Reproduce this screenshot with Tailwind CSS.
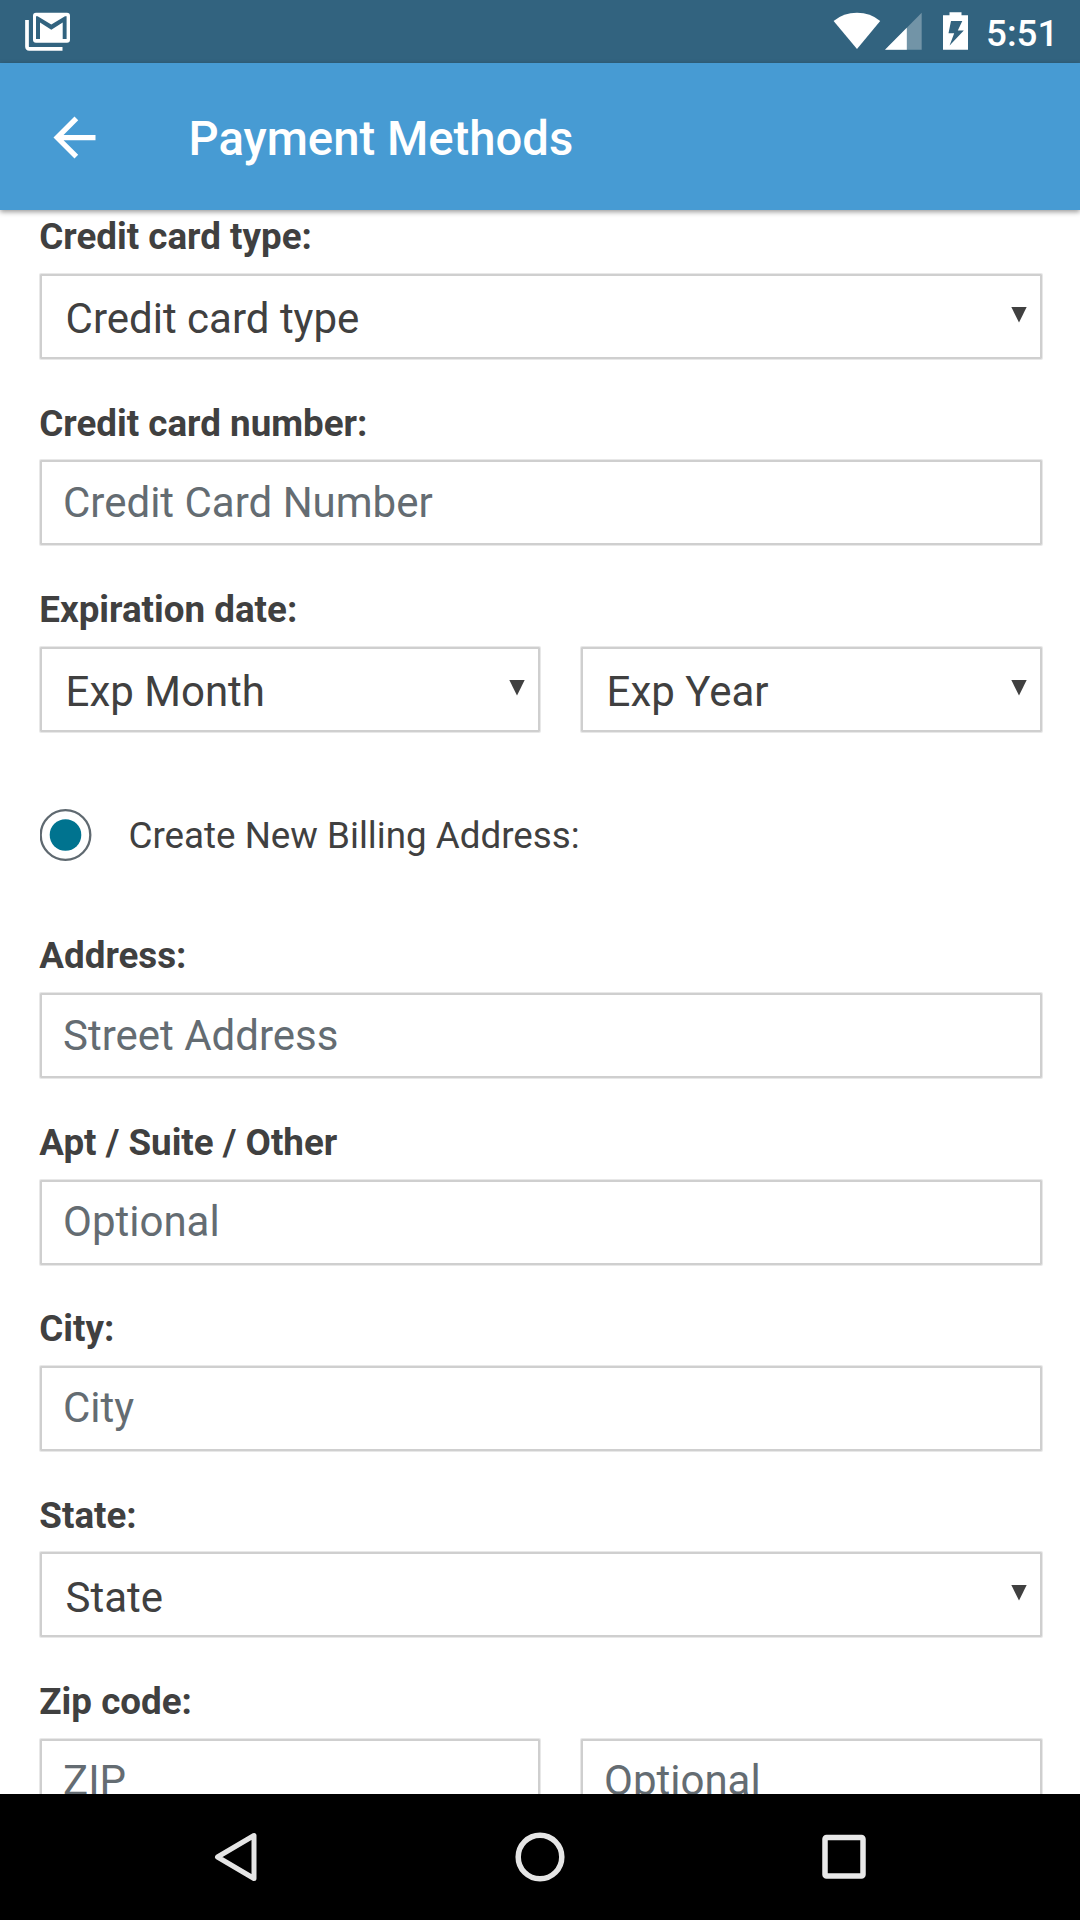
<!DOCTYPE html>
<html lang="en">
<head>
<meta charset="utf-8">
<title>Payment Methods</title>
<script src="https://cdn.jsdelivr.net/npm/@tailwindcss/browser@4"></script>
</head>
<body class="bg-white">
<div class="flex h-[1920px] w-[1080px] flex-col overflow-hidden bg-white font-['Roboto',sans-serif] text-[#404040]">
  <!-- Status bar -->
  <header class="flex h-[63px] shrink-0 items-start bg-[#32637f] text-white">
    <svg class="ml-[25px] mt-[12px] h-[39px] w-[46px]" viewBox="0 0 46 39" fill="none">
      <path d="M2 8V34.5Q2 36.8 4.300 36.8H37.500" stroke="#fff" stroke-width="3.700"/>
      <path fill="#fff" fill-rule="evenodd" d="M11 .7H42Q45 .7 45 3.700V27.700Q45 30.700 42 30.700H11Q8 30.700 8 27.700V3.700Q8 .7 11 .7ZM11 27H15V10.500L26.300 17.800L37.700 10.500V27H41.600V4.200H40L26.300 12.600L12.600 4.200H11Z"/>
    </svg>
    <svg class="ml-[762px] mt-[12px] h-[39px] w-[48px]" viewBox="0 0 48 39"><path fill="#fff" d="M.6 9Q10.500.8 24 .8T47.200 9L24 37Z"/></svg>
    <svg class="ml-[4px] mt-[12px] h-[39px] w-[37px]" viewBox="0 0 37 39"><path fill="#7294a7" d="M36.700.8V37.700H0Z"/><path fill="#fff" d="M21.800 15.700V37.700H0Z"/></svg>
    <svg class="ml-[21px] mt-[12px] h-[39px] w-[25px]" viewBox="0 0 25 39"><path fill="#fff" fill-rule="evenodd" d="M6.500.3H18.500V3.200H25V37.700H0V3.200H6.500ZM8 9L5.500 21.300H11.200L6.600 33.500L20.800 18.500H14.800L19.300 9Z"/></svg>
    <span class="ml-[18px] mt-[12px] text-[36.75px] leading-[44px] font-medium">5:51</span>
  </header>
  <!-- App bar -->
  <div class="relative z-10 flex h-[147px] shrink-0 items-start bg-[#479bd3] pl-[42.500px] text-white shadow-[0_2px_5px_rgba(0,0,0,0.4)]">
    <svg class="mt-[43px] h-[63px] w-[63px]" viewBox="0 0 24 24"><path fill="#fff" d="M20 11H7.830l5.590-5.590L12 4l-8 8 8 8 1.410-1.410L7.830 13H20z"/></svg>
    <h1 class="ml-[83px] mt-[48px] text-[47.250px] leading-[56px] font-medium">Payment Methods</h1>
  </div>
  <!-- Form -->
  <main class="min-h-0 flex-1 overflow-hidden pl-[40px] pr-[38px] pt-[5px]">
    <section class="flex flex-col gap-[42.500px]">
      <div>
        <div class="-ml-[0.700px] mb-[14.900px] h-[44px] pt-[0.200px] text-[36.750px] leading-[44px] font-bold">Credit card type:</div>
        <div class="flex h-[85px] items-start justify-between rounded-[1px] border-2 border-[#cfcfcf] pl-[23.600px] pr-[13.500px] shadow-[0_0_0_1px_#e8e8e8]"><span class="mt-[18.200px] text-[42px] leading-[50px]">Credit card type</span><svg class="mt-[31px] h-[16px] w-[16px]" viewBox="0 0 16 16"><path fill="#404040" d="M.3 0H15.700L8 15.500Z"/></svg></div>
      </div>
      <div>
        <div class="-ml-[0.700px] mb-[14.900px] h-[44px] pt-[0.200px] text-[36.750px] leading-[44px] font-bold">Credit card number:</div>
        <div class="h-[85px] rounded-[1px] border-2 border-[#cfcfcf] pl-[21px] pt-[15.500px] text-[42px] leading-[50px] text-[#646c72] shadow-[0_0_0_1px_#e8e8e8]">Credit Card Number</div>
      </div>
      <div>
        <div class="-ml-[0.700px] mb-[14.900px] h-[44px] pt-[0.200px] text-[36.750px] leading-[44px] font-bold">Expiration date:</div>
        <div class="grid grid-cols-[500px_461px] gap-[41px]">
          <div class="flex h-[85px] items-start justify-between rounded-[1px] border-2 border-[#cfcfcf] pl-[23.600px] pr-[13px] shadow-[0_0_0_1px_#e8e8e8]"><span class="mt-[18.200px] text-[42px] leading-[50px]">Exp Month</span><svg class="mt-[31px] h-[16px] w-[16px]" viewBox="0 0 16 16"><path fill="#404040" d="M.3 0H15.700L8 15.500Z"/></svg></div>
          <div class="flex h-[85px] items-start justify-between rounded-[1px] border-2 border-[#cfcfcf] pl-[23.600px] pr-[13.500px] shadow-[0_0_0_1px_#e8e8e8]"><span class="mt-[18.200px] text-[42px] leading-[50px]">Exp Year</span><svg class="mt-[31px] h-[16px] w-[16px]" viewBox="0 0 16 16"><path fill="#404040" d="M.3 0H15.700L8 15.500Z"/></svg></div>
        </div>
      </div>
    </section>
    <div class="flex h-[202.600px] items-start pt-[77px]">
      <svg class="h-[52px] w-[52px]" viewBox="0 0 52 52"><circle cx="25.500" cy="26" r="24.800" fill="#fff" stroke="#5f6970" stroke-width="2.300"/><circle cx="25.500" cy="26" r="15.800" fill="#00738f"/></svg>
      <span class="ml-[36.500px] mt-[5px] text-[36.750px] leading-[44px]">Create New Billing Address:</span>
    </div>
    <section class="flex flex-col gap-[42.500px]">
      <div>
        <div class="-ml-[0.700px] mb-[14.900px] h-[44px] pt-[0.200px] text-[36.750px] leading-[44px] font-bold">Address:</div>
        <div class="h-[85px] rounded-[1px] border-2 border-[#cfcfcf] pl-[21px] pt-[15.500px] text-[42px] leading-[50px] text-[#646c72] shadow-[0_0_0_1px_#e8e8e8]">Street Address</div>
      </div>
      <div>
        <div class="-ml-[0.700px] mb-[14.900px] h-[44px] pt-[0.200px] text-[36.750px] leading-[44px] font-bold">Apt / Suite / Other</div>
        <div class="h-[85px] rounded-[1px] border-2 border-[#cfcfcf] pl-[21px] pt-[15.500px] text-[42px] leading-[50px] text-[#646c72] shadow-[0_0_0_1px_#e8e8e8]">Optional</div>
      </div>
      <div>
        <div class="-ml-[0.700px] mb-[14.900px] h-[44px] pt-[0.200px] text-[36.750px] leading-[44px] font-bold">City:</div>
        <div class="h-[85px] rounded-[1px] border-2 border-[#cfcfcf] pl-[21px] pt-[15.500px] text-[42px] leading-[50px] text-[#646c72] shadow-[0_0_0_1px_#e8e8e8]">City</div>
      </div>
      <div>
        <div class="-ml-[0.700px] mb-[14.900px] h-[44px] pt-[0.200px] text-[36.750px] leading-[44px] font-bold">State:</div>
        <div class="flex h-[85px] items-start justify-between rounded-[1px] border-2 border-[#cfcfcf] pl-[23.600px] pr-[13.500px] shadow-[0_0_0_1px_#e8e8e8]"><span class="mt-[18.200px] text-[42px] leading-[50px]">State</span><svg class="mt-[31px] h-[16px] w-[16px]" viewBox="0 0 16 16"><path fill="#404040" d="M.3 0H15.700L8 15.500Z"/></svg></div>
      </div>
      <div>
        <div class="-ml-[0.700px] mb-[14.900px] h-[44px] pt-[0.200px] text-[36.750px] leading-[44px] font-bold">Zip code:</div>
        <div class="grid grid-cols-[500px_461px] gap-[41px]">
          <div class="h-[85px] rounded-[1px] border-2 border-[#cfcfcf] pl-[21px] pt-[15.500px] text-[42px] leading-[50px] text-[#646c72] shadow-[0_0_0_1px_#e8e8e8]">ZIP</div>
          <div class="h-[85px] rounded-[1px] border-2 border-[#cfcfcf] pl-[21px] pt-[15.500px] text-[42px] leading-[50px] text-[#646c72] shadow-[0_0_0_1px_#e8e8e8]">Optional</div>
        </div>
      </div>
    </section>
  </main>
  <!-- System navigation -->
  <nav class="relative z-10 flex h-[126px] shrink-0 items-center justify-center gap-[244px] bg-black">
    <svg class="h-[60px] w-[60px]" viewBox="0 0 60 60" fill="none" stroke="#e5e5e5" stroke-width="5" stroke-linejoin="round"><path d="M48 8.500V51.500L11.500 30Z"/></svg>
    <svg class="h-[60px] w-[60px]" viewBox="0 0 60 60" fill="none" stroke="#e5e5e5" stroke-width="5.500"><circle cx="30" cy="30" r="21.800"/></svg>
    <svg class="h-[60px] w-[60px]" viewBox="0 0 60 60" fill="none" stroke="#e9e9e9" stroke-width="5.500"><rect x="11" y="10.500" width="38" height="38.500" rx="1.500"/></svg>
  </nav>
</div>
</body>
</html>
